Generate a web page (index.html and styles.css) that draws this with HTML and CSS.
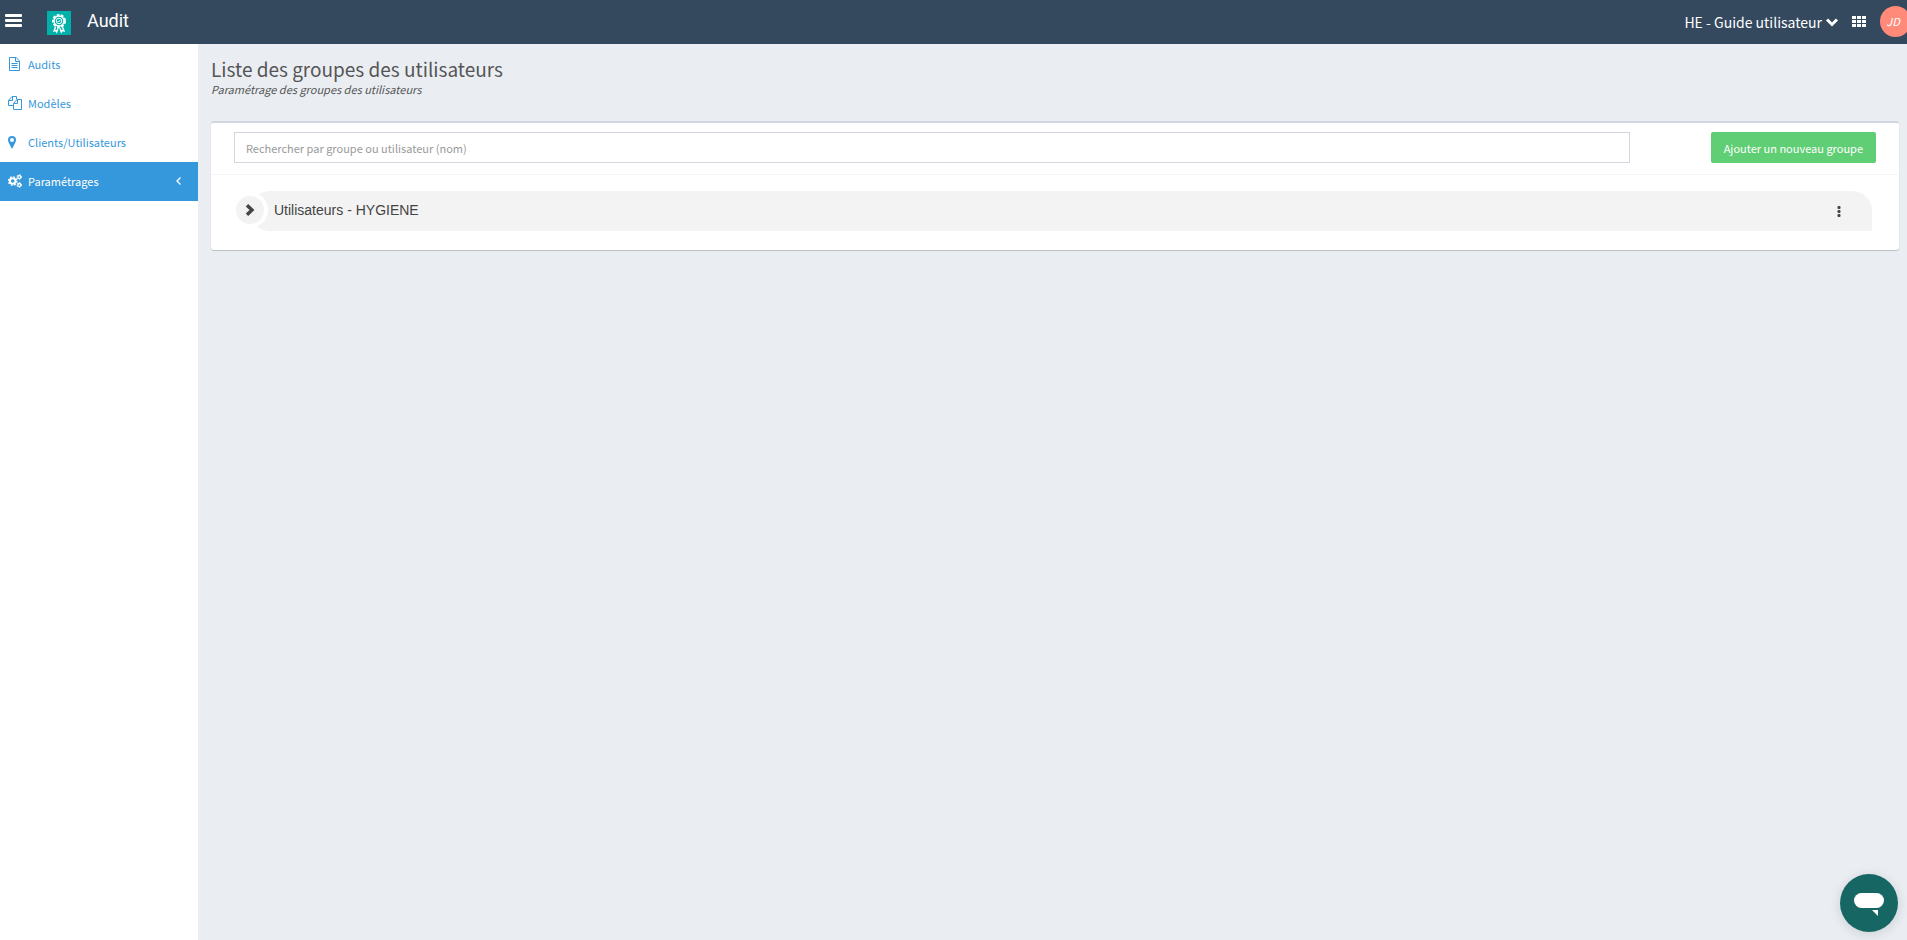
FILE: index.html
```html
<!DOCTYPE html>
<html lang="fr">
<head>
    <meta charset="UTF-8">
    <title>Audit - Liste des groupes des utilisateurs</title>
    <link rel="stylesheet" href="styles.css">
</head>
<body>
<header class="topbar">
    <button type="button" class="icon-btn menu-btn" aria-label="Menu">
        <svg width="17" height="13" viewBox="0 0 17 13" fill="currentColor">
            <rect width="17" height="3" rx="1"/><rect y="5" width="17" height="3" rx="1"/><rect y="10" width="17" height="3" rx="1"/>
        </svg>
    </button>
    <a href="#" class="logo" aria-label="Accueil">
        <svg width="24" height="24" viewBox="0 0 24 24" fill="none" stroke="#fff">
            <circle cx="12" cy="10" r="6" stroke-width="2" stroke-dasharray="2.8 1.4"/>
            <circle cx="12" cy="10" r="5" stroke-width="1.4"/>
            <circle cx="12" cy="10" r="2.8" stroke-width="1"/>
            <path d="M10.6 10l1 1 1.8-2" stroke-width="1"/>
            <path d="M8.5 16l-1.5 4 1.8-.5.9 1.5 1.4-4M15.5 16l1.5 4-1.8-.5-.9 1.5-1.4-4" stroke-width="1.4"/>
        </svg>
    </a>
    <span class="app-name">Audit</span>
    <button type="button" class="icon-btn account-btn">
        HE - Guide utilisateur
        <svg width="12" height="9" viewBox="0 0 12 9" fill="none" stroke="currentColor" stroke-width="3"><path d="M1 1.500l5 5 5-5"/></svg>
    </button>
    <button type="button" class="icon-btn apps-btn" aria-label="Applications">
        <svg width="14" height="11" viewBox="0 0 14 11" fill="currentColor">
            <path d="M0 0h4v3H0zM5 0h4v3H5zM10 0h4v3h-4zM0 4h4v3H0zM5 4h4v3H5zM10 4h4v3h-4zM0 8h4v3H0zM5 8h4v3H5zM10 8h4v3h-4z"/>
        </svg>
    </button>
    <button type="button" class="avatar">JD</button>
</header>

<div class="layout">
    <nav class="sidebar">
        <a href="#">
            <svg width="14" height="14" viewBox="0 0 14 14" fill="none" stroke="currentColor">
                <path d="M1.5.5h6.6l3.4 3.4v9.6h-10zM7.5.5v4h4"/><path d="M3.5 6.5h6M3.5 8.5h6M3.5 10.5h6"/>
            </svg>
            Audits
        </a>
        <a href="#">
            <svg width="14" height="14" viewBox="0 0 14 14" fill="none" stroke="currentColor">
                <path d="M5.5 9.5h-5V4.3L4.1.5h4.4v3M4.5.5v4h-4"/><path d="M5.5 13.5V7.3l3.6-3.8h4.4v10zM9.5 3.5v4h-4"/>
            </svg>
            Modèles
        </a>
        <a href="#">
            <svg width="14" height="14" viewBox="0 0 14 14" fill="currentColor">
                <path fill-rule="evenodd" d="M4 1a4 4 0 0 1 4 4c0 1.200-.4 2-.8 2.800L4.600 13a.7.7 0 0 1-1.200 0L.8 7.800C.4 7 0 6.200 0 5a4 4 0 0 1 4-4zm0 2a2 2 0 1 0 0 4 2 2 0 0 0 0-4z"/>
            </svg>
            Clients/Utilisateurs
        </a>
        <a href="#" class="active">
            <svg width="14" height="14" viewBox="0 0 14 14" fill="none" stroke="currentColor">
                <circle cx="4.700" cy="7" r="2.800" stroke-width="2"/>
                <circle cx="4.700" cy="7" r="4.200" stroke-width="1.400" stroke-dasharray="1.700 1.600"/>
                <circle cx="11.300" cy="3" r="1.500" stroke-width="1.300"/>
                <circle cx="11.300" cy="3" r="2.400" stroke-dasharray="1.200 1.300"/>
                <circle cx="11.300" cy="11" r="1.500" stroke-width="1.300"/>
                <circle cx="11.300" cy="11" r="2.400" stroke-dasharray="1.200 1.300"/>
            </svg>
            Paramétrages
            <svg class="caret" width="5" height="8" viewBox="0 0 5 8" fill="none" stroke="currentColor" stroke-width="1.300"><path d="M4.500.5L1 4l3.500 3.500"/></svg>
        </a>
    </nav>

    <main class="content">
        <h1>Liste des groupes des utilisateurs</h1>
        <p class="subtitle">Paramétrage des groupes des utilisateurs</p>

        <section class="box">
            <div class="box-header">
                <input type="text" class="search" aria-label="Rechercher" placeholder="Rechercher par groupe ou utilisateur (nom)">
                <button type="button" class="add-btn">Ajouter un nouveau groupe</button>
            </div>
            <div class="box-body">
                <div class="group">
                    <button type="button" class="toggle" aria-label="Ouvrir le groupe">
                        <svg width="10" height="12" viewBox="0 0 10 12" fill="none" stroke="currentColor" stroke-width="3.400"><path d="M2 1.200L7 6l-5 4.800"/></svg>
                    </button>
                    <span class="group-name">Utilisateurs - HYGIENE</span>
                    <button type="button" class="icon-btn more-btn" aria-label="Actions">
                        <svg width="4" height="12" viewBox="0 0 4 12" fill="currentColor"><rect x="0.500" width="3" height="3" rx="1"/><rect x="0.500" y="4" width="3" height="3" rx="1"/><rect x="0.500" y="8" width="3" height="3" rx="1"/></svg>
                    </button>
                </div>
            </div>
        </section>
    </main>
</div>

<button type="button" class="chat" aria-label="Ouvrir le chat">
    <svg width="30" height="24" viewBox="0 0 30 24" fill="#fff"><rect width="30" height="15" rx="7.500"/><path d="M18 17h6v6z"/></svg>
</button>
</body>
</html>
```
FILE: styles.css
```css
* { box-sizing: border-box; }
body { margin: 0; min-height: 100vh; display: flex; flex-direction: column; background: #eaeef3; color: #555; font-family: "Noto Sans CJK SC", "Open Sans", sans-serif; font-size: 11px; line-height: 16px; overflow-x: hidden; }
button, input { font: inherit; }
button { cursor: pointer; }
a { color: #3598dc; text-decoration: none; }
svg { display: block; flex: none; }

/* top bar */
.topbar { display: flex; align-items: center; height: 44px; padding-left: 5px; background: #34495e; color: #fff; }
.icon-btn { display: flex; align-items: center; padding: 0; border: 0; background: none; color: inherit; }
.menu-btn { margin-bottom: 3px; }
.logo { margin: 2px 16px 0 25px; background: #00b1a9; }
.app-name { margin-bottom: 2px; font: 18px/24px Roboto, sans-serif; }
.account-btn { gap: 4px; margin-left: auto; font-size: 14px; line-height: 24px; }
.apps-btn { margin: 0 14px 2px; }
.avatar { flex: none; width: 31px; height: 31px; margin: 0 -4px 2px 0; padding: 0 5px 0 0; border: 0; border-radius: 50%; background: #ff8a7a; color: #fff; font-size: 11px; font-style: italic; }

/* sidebar */
.layout { display: flex; flex: 1; }
.sidebar { flex: none; width: 198px; padding-top: 1px; background: #fff; }
.sidebar a { display: flex; align-items: center; gap: 6px; height: 39px; padding: 0 17px 2px 8px; }
.sidebar .active { background: #3598dc; color: #fff; }
.caret { margin-left: auto; }

/* content */
.content { flex: 1; padding: 13px 8px 0 13px; }
h1 { margin: 0; font-size: 19px; font-weight: 400; line-height: 24px; }
.subtitle { margin: 0 0 24px; font-style: italic; }
.box { border-top: 2px solid #d2d6de; border-radius: 3px; background: #fff; box-shadow: 0 1px 1px #0003; }
.box-header { display: flex; justify-content: space-between; padding: 9px 23px 11px; border-bottom: 1px solid #f4f4f4; }
.search { width: 85%; height: 31px; padding: 0 11px; border: 1px solid #d2d6de; color: #555; }
.search::placeholder { color: #999; opacity: 1; }
.add-btn { height: 31px; padding: 0 13px; border: 0; border-radius: 2px; background: #5fce74; color: #fff; }
.box-body { padding: 16px 27px 19px 25px; }
.group { display: flex; align-items: center; height: 40px; margin-left: 14px; padding-bottom: 2px; border-radius: 20px 20px 0 20px; background: #f3f3f3; color: #444; }
.toggle { display: flex; align-items: center; justify-content: center; width: 36px; height: 36px; margin-left: -18px; padding: 0; border: 4px solid #fff; border-radius: 50%; background: #f3f3f3; color: #444; }
.group-name { margin-left: 6px; font: 14px/20px "Liberation Sans", sans-serif; }
.more-btn { margin: 4px 31px 0 auto; }

.chat { position: fixed; right: 9px; bottom: 8px; display: flex; align-items: center; justify-content: center; width: 58px; height: 58px; padding: 4px 0 0; border: 0; border-radius: 50%; background: #166763; box-shadow: 0 2px 12px #0002; }
```
